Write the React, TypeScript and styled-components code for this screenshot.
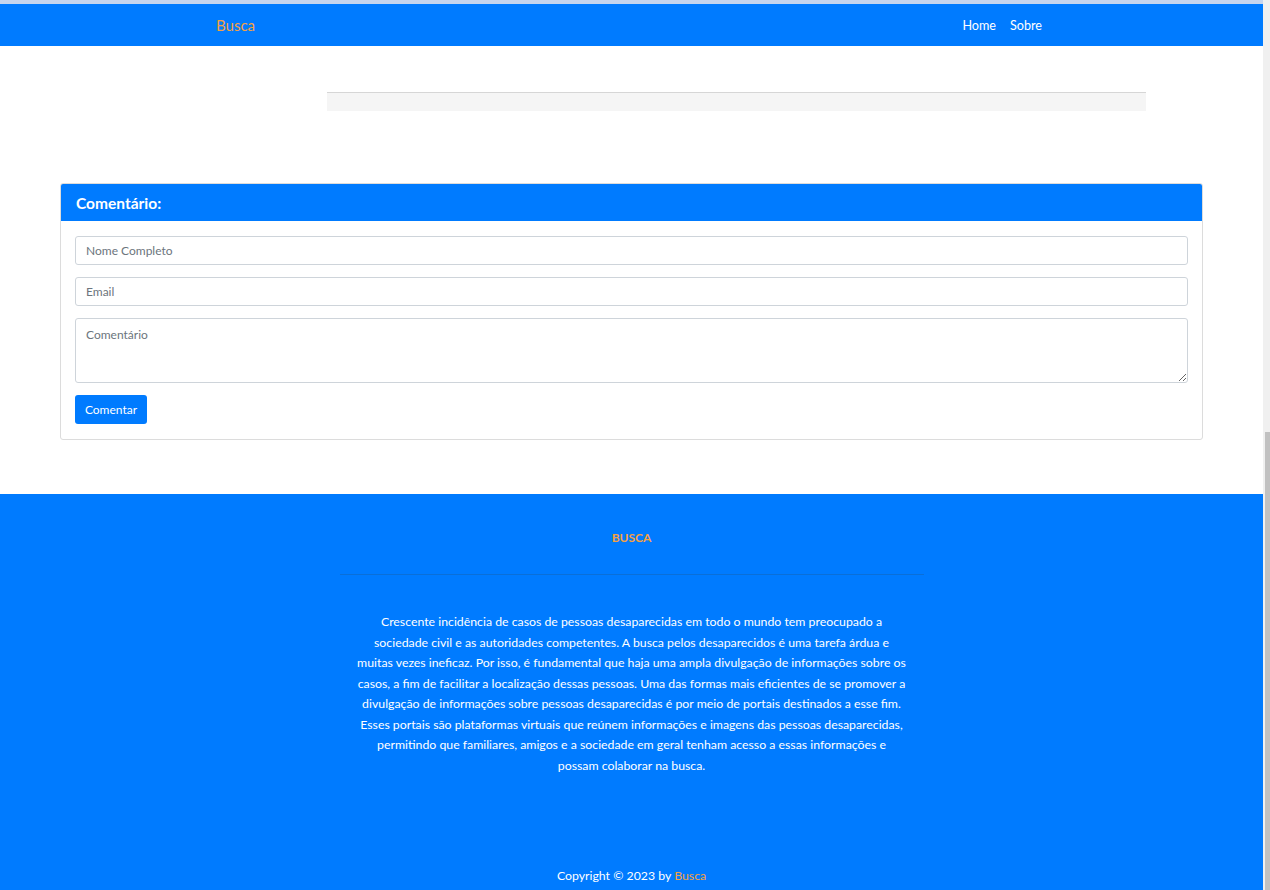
import React from 'react'
import styled, { createGlobalStyle } from 'styled-components'

const GlobalStyle = createGlobalStyle`
  html, body {
    margin: 0;
    padding: 0;
    height: 100%;
    overflow: hidden;
    font-family: 'Lato', 'Liberation Sans', sans-serif;
  }
  * { box-sizing: border-box; }
`

const blue = '#007bff'
const orange = '#f5a142'

const Frame = styled.div`
  display: flex;
  height: 100vh;
  background: #fff;
`

const Page = styled.div`
  flex: 1;
  display: flex;
  flex-direction: column;
  overflow: hidden;
`

const ScrollTrack = styled.div`
  width: 7px;
  background: #f0f0f0;
  display: flex;
  flex-direction: column;
  padding-top: 432px;
`

const ScrollThumb = styled.div`
  margin-left: 2px;
  flex: 1;
  background: #c1c1c1;
`

const TopStrip = styled.div`
  height: 4px;
  background: #c6d5ee;
`

const NavBar = styled.nav`
  height: 42px;
  background: ${blue};
  display: flex;
  align-items: center;
  justify-content: space-between;
  padding: 0 221px 0 216px;
`

const Brand = styled.a`
  color: ${orange};
  font-size: 15px;
  text-decoration: none;
`

const NavLinks = styled.div`
  display: flex;
  gap: 14px;
`

const NavLink = styled.a`
  color: #fff;
  font-size: 12.6px;
  text-decoration: none;
`

const Main = styled.main`
  height: 448px;
  display: flex;
  flex-direction: column;
  padding: 46px 60px 0 60px;
`

const Strip = styled.div`
  margin: 0 57px 0 267px;
  height: 19px;
  border-top: 1px solid #d6d6d6;
  background: #f5f5f5;
`

const Card = styled.section`
  margin-top: 72px;
  border: 1px solid #dcdcdc;
  border-radius: 3px;
  overflow: hidden;
`

const CardHeader = styled.div`
  height: 37px;
  background: ${blue};
  color: #fff;
  font-weight: 700;
  font-size: 15.5px;
  display: flex;
  align-items: center;
  padding: 0 15px;
`

const CardBody = styled.form`
  display: flex;
  flex-direction: column;
  gap: 12px;
  padding: 15px 14px 15px 14px;
`

const Field = styled.input`
  height: 29px;
  border: 1px solid #ced4da;
  border-radius: 3px;
  padding: 0 10px;
  font-family: inherit;
  font-size: 12px;
  &::placeholder { color: #6c757d; }
`

const Area = styled.textarea`
  height: 65px;
  border: 1px solid #ced4da;
  border-radius: 3px;
  padding: 8px 10px;
  font-family: inherit;
  font-size: 12px;
  resize: vertical;
  &::placeholder { color: #6c757d; }
`

const Submit = styled.button`
  align-self: flex-start;
  height: 29px;
  width: 72px;
  border: none;
  border-radius: 3px;
  background: ${blue};
  color: #fff;
  font-family: inherit;
  font-size: 12px;
  padding: 0;
`

const Footer = styled.footer`
  flex: 1;
  background: ${blue};
  display: flex;
  flex-direction: column;
  align-items: center;
  padding-top: 36px;
`

const FooterTitle = styled.h6`
  margin: 0;
  color: ${orange};
  font-size: 12px;
  font-weight: 700;
  line-height: 16px;
`

const Rule = styled.hr`
  width: 584px;
  margin: 28px 0 37px;
  border: none;
  border-top: 1px solid #0a6fd8;
`

const About = styled.p`
  margin: 0;
  width: 550px;
  color: #fff;
  font-size: 12.3px;
  line-height: 20.5px;
  text-align: center;
`

const Copyright = styled.p`
  margin: 92px 0 0;
  color: #fff;
  font-size: 12.3px;
  line-height: 16px;
`

const Accent = styled.span`
  color: ${orange};
`

export default function App() {
  return (
    <Frame>
      <GlobalStyle />
      <Page>
        <TopStrip />
        <NavBar>
          <Brand href="#">Busca</Brand>
          <NavLinks>
            <NavLink href="#">Home</NavLink>
            <NavLink href="#">Sobre</NavLink>
          </NavLinks>
        </NavBar>
        <Main>
          <Strip />
          <Card>
            <CardHeader>Comentário:</CardHeader>
            <CardBody onSubmit={(e) => e.preventDefault()}>
              <Field type="text" placeholder="Nome Completo" />
              <Field type="email" placeholder="Email" />
              <Area placeholder="Comentário" />
              <Submit type="submit">Comentar</Submit>
            </CardBody>
          </Card>
        </Main>
        <Footer>
          <FooterTitle>BUSCA</FooterTitle>
          <Rule />
          <About>
            Crescente incidência de casos de pessoas desaparecidas em todo o mundo tem preocupado a
            sociedade civil e as autoridades competentes. A busca pelos desaparecidos é uma tarefa árdua e
            muitas vezes ineficaz. Por isso, é fundamental que haja uma ampla divulgação de informações sobre os
            casos, a fim de facilitar a localização dessas pessoas. Uma das formas mais eficientes de se promover a
            divulgação de informações sobre pessoas desaparecidas é por meio de portais destinados a esse fim.
            Esses portais são plataformas virtuais que reúnem informações e imagens das pessoas desaparecidas,
            permitindo que familiares, amigos e a sociedade em geral tenham acesso a essas informações e
            possam colaborar na busca.
          </About>
          <Copyright>
            Copyright © 2023 by <Accent>Busca</Accent>
          </Copyright>
        </Footer>
      </Page>
      <ScrollTrack>
        <ScrollThumb />
      </ScrollTrack>
    </Frame>
  )
}
